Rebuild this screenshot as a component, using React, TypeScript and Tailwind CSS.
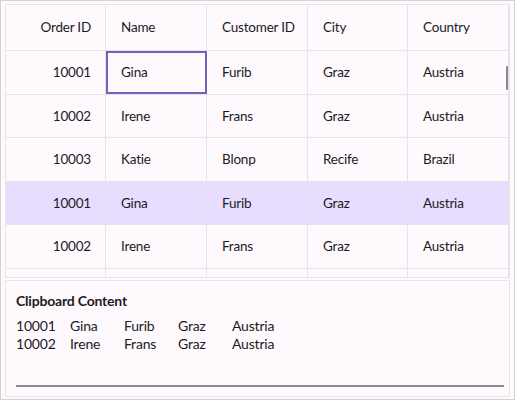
const columns = ["Order ID", "Name", "Customer ID", "City", "Country"]

const rows = [
  ["10001", "Gina", "Furib", "Graz", "Austria"],
  ["10002", "Irene", "Frans", "Graz", "Austria"],
  ["10003", "Katie", "Blonp", "Recife", "Brazil"],
  ["10001", "Gina", "Furib", "Graz", "Austria"],
  ["10002", "Irene", "Frans", "Graz", "Austria"],
  ["", "", "", "", ""],
]

const widths = ["w-[100px]", "w-[101px]", "w-[101px]", "w-[100px]", "w-[101px]"]

function Cell({ text, i, selected }: { text: string; i: number; selected?: boolean }) {
  return (
    <div
      className={`${widths[i]} shrink-0 h-full flex items-center border-r border-[#e7e3e8] ${
        i === 0 ? "justify-end pr-[14px]" : "pl-[15px]"
      } ${selected ? "outline-2 outline-[#7461b9] -outline-offset-2" : ""}`}
    >
      {text}
    </div>
  )
}

export default function App() {
  return (
    <div
      className="w-[515px] h-[400px] border border-[#d5d2d5] bg-[#fdf9fd] pt-[3px] px-[4px] flex flex-col text-[13.5px] tracking-[-0.2px] text-[#1c1b1f]"
      style={{ fontFamily: 'Lato, "Noto Sans", sans-serif' }}
    >
      <div className="relative h-[274px] border border-[#e7e3e8] overflow-hidden">
        <div className="flex h-[46px] border-b border-[#e7e3e8]">
          {columns.map((c, i) => (
            <Cell key={c} text={c} i={i} />
          ))}
        </div>
        {rows.map((r, ri) => (
          <div
            key={ri}
            className={`flex h-[43.5px] border-b border-[#e7e3e8] ${ri === 3 ? "bg-[#e8ddff]" : ""}`}
          >
            {r.map((t, i) => (
              <Cell key={i} text={t} i={i} selected={ri === 0 && i === 1} />
            ))}
          </div>
        ))}
        <div className="absolute right-[1px] top-[61px] w-[2px] h-[24px] rounded bg-[#8a878c]" />
      </div>
      <div className="mt-[2px] h-[117px] border border-[#e7e3e8] pl-[10px] pr-[5px] pt-[10px] flex flex-col">
        <div className="font-bold text-[14px] leading-[20px]">Clipboard Content</div>
        <div className="mt-[6px] leading-[18px] text-[14px]">
          {rows.slice(0, 2).map((r, ri) => (
            <div key={ri} className="flex">
              {r.map((t, i) => (
                <span key={i} className="w-[54px] shrink-0 whitespace-nowrap">
                  {t}
                </span>
              ))}
            </div>
          ))}
        </div>
        <div className="mt-auto mb-[9px] h-[2px] bg-[#8f8c91]" />
      </div>
    </div>
  )
}
